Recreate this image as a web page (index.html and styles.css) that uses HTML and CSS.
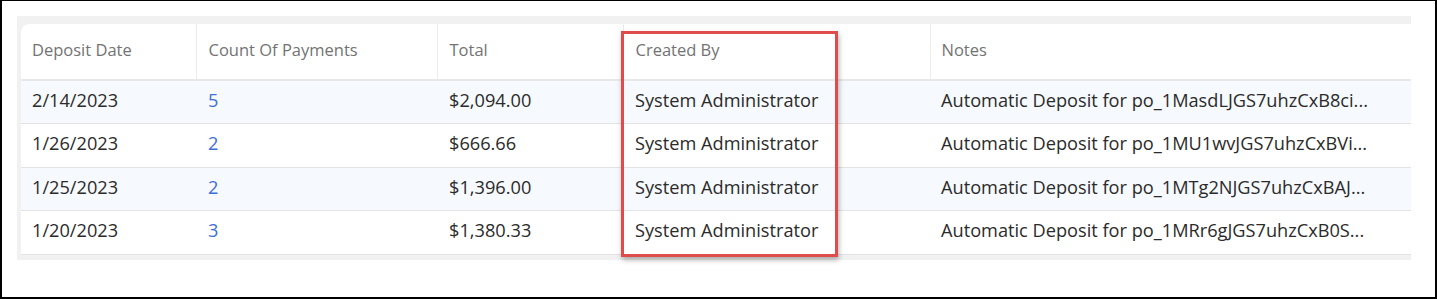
FILE: index.html
```html
<!DOCTYPE html>
<html>
<head>
<meta charset="utf-8">
<link rel="stylesheet" href="styles.css">
</head>
<body>
<div class="frame">
  <div class="panel">
    <div class="card">
      <table class="grid">
        <colgroup>
          <col class="c1"><col class="c2"><col class="c3"><col class="c4"><col class="c5">
        </colgroup>
        <thead>
          <tr>
            <th>Deposit Date</th>
            <th>Count Of Payments</th>
            <th>Total</th>
            <th>Created By</th>
            <th>Notes</th>
          </tr>
        </thead>
        <tbody>
          <tr class="alt">
            <td>2/14/2023</td><td><a class="link">5</a></td><td>$2,094.00</td><td>System Administrator</td><td>Automatic Deposit for po_1MasdLJGS7uhzCxB8ci...</td>
          </tr>
          <tr>
            <td>1/26/2023</td><td><a class="link">2</a></td><td>$666.66</td><td>System Administrator</td><td>Automatic Deposit for po_1MU1wvJGS7uhzCxBVi...</td>
          </tr>
          <tr class="alt">
            <td>1/25/2023</td><td><a class="link">2</a></td><td>$1,396.00</td><td>System Administrator</td><td>Automatic Deposit for po_1MTg2NJGS7uhzCxBAJ...</td>
          </tr>
          <tr>
            <td>1/20/2023</td><td><a class="link">3</a></td><td>$1,380.33</td><td>System Administrator</td><td>Automatic Deposit for po_1MRr6gJGS7uhzCxB0S...</td>
          </tr>
        </tbody>
      </table>
    </div>
    <div class="highlight"></div>
  </div>
</div>
</body>
</html>
```

FILE: styles.css
```css
html, body {
  margin: 0;
  padding: 0;
  background: #ffffff;
}
.frame {
  box-sizing: border-box;
  width: 1437px;
  height: 299px;
  border-top: 1px solid #000;
  border-left: 2px solid #000;
  border-right: 2px solid #000;
  border-bottom: 2px solid #000;
  padding: 15px 0 0 15px;
  font-family: "Open Sans", "Liberation Sans", sans-serif;
}
.panel {
  position: relative;
  width: 1394px;
  box-sizing: border-box;
  background: #f1f1f1;
  padding: 8px 0 5px 4px;
}
.card {
  background: #fff;
  border-top-left-radius: 8px;
  overflow: hidden;
}
.grid {
  width: 100%;
  border-collapse: collapse;
  table-layout: fixed;
  font-size: 18.2px;
}
.c1 { width: 175px; }
.c2 { width: 241px; }
.c3 { width: 186px; }
.c4 { width: 307px; }
.c5 { width: auto; }
.grid th {
  height: 56px;
  box-sizing: border-box;
  text-align: left;
  font-weight: 400;
  font-size: 16.5px;
  color: #737373;
  padding: 0 11px 4px 11px;
  border-right: 1px solid #ececec;
  border-bottom: 2px solid #e8e8e8;
  white-space: nowrap;
}
.grid th:nth-child(2),
.grid th:nth-child(3),
.grid th:nth-child(4),
.grid td:nth-child(2),
.grid td:nth-child(3),
.grid td:nth-child(4) {
  padding-left: 12px;
}
.grid th:last-child {
  border-right: none;
}
.grid td {
  height: 43.5px;
  box-sizing: border-box;
  padding: 0 11px 4px 11px;
  color: #2b2b2b;
  border-bottom: 1px solid #e3e3e3;
  white-space: nowrap;
  overflow: hidden;
}
.grid tr.alt td {
  background: #f6f9fd;
}
.link {
  color: #3f6fd8;
  text-decoration: none;
}
.highlight {
  position: absolute;
  left: 604px;
  top: 15px;
  width: 217px;
  height: 226px;
  box-sizing: border-box;
  border: 3px solid #e04b4b;
  box-shadow: 1px 3px 5px rgba(0, 0, 0, 0.3);
  pointer-events: none;
}
```
